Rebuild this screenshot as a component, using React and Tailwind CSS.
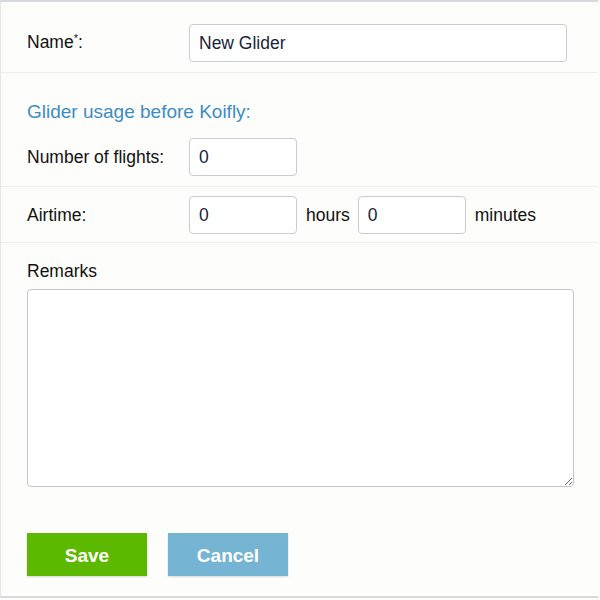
import React, { useState } from 'react';

export default function App() {
  const [name, setName] = useState('New Glider');
  const [flights, setFlights] = useState('0');
  const [hours, setHours] = useState('0');
  const [minutes, setMinutes] = useState('0');
  const [remarks, setRemarks] = useState('');

  const input =
    'h-[38px] rounded-[4px] border border-[#c9cdd1] bg-white px-[9px] text-[17.5px] text-[#1a1f3a] outline-none';

  return (
    <div
      className="w-[600px] h-[600px] bg-[#fdfdfb] text-[#111] overflow-hidden"
      style={{ fontFamily: '"Liberation Sans", Arial, sans-serif' }}
    >
      <div className="w-[598px] h-[598px] border-t-2 border-l border-b-2 border-t-[#d6dadd] border-l-[#e4e7ea] border-b-[#d6dadd]">
        {/* Name */}
        <div className="flex items-center pt-[22px] pb-[10px] border-b border-[#eceff1]">
          <label className="w-[188px] pl-[26px] text-[17.5px] leading-[20px]">
            Name<span className="relative -top-[6px] text-[11px]">*</span>:
          </label>
          <input
            className={`${input} w-[378px]`}
            value={name}
            onChange={(e) => setName(e.target.value)}
          />
        </div>

        {/* Glider usage */}
        <div className="pt-[28px] pb-[10px] border-b border-[#eceff1]">
          <div className="pl-[26px] text-[19px] leading-[22px] text-[#3d8cc5]">
            Glider usage before Koifly:
          </div>
          <div className="flex items-center mt-[15px]">
            <label className="w-[188px] pl-[26px] text-[17.5px] leading-[20px]">
              Number of flights:
            </label>
            <input
              className={`${input} w-[108px]`}
              value={flights}
              onChange={(e) => setFlights(e.target.value)}
            />
          </div>
        </div>

        {/* Airtime */}
        <div className="flex items-center pt-[9px] pb-[8px] border-b border-[#eceff1]">
          <label className="w-[188px] pl-[26px] text-[17.5px] leading-[20px]">
            Airtime:
          </label>
          <input
            className={`${input} w-[108px]`}
            value={hours}
            onChange={(e) => setHours(e.target.value)}
          />
          <span className="ml-[9px] mr-[8px] text-[17.5px]">hours</span>
          <input
            className={`${input} w-[108px]`}
            value={minutes}
            onChange={(e) => setMinutes(e.target.value)}
          />
          <span className="ml-[9px] text-[17.5px]">minutes</span>
        </div>

        {/* Remarks */}
        <div className="pt-[18px] pl-[26px]">
          <div className="text-[17.5px] leading-[20px]">Remarks</div>
          <textarea
            className="mt-[8px] block w-[547px] h-[198px] rounded-[4px] border border-[#c2c6ca] bg-white outline-none resize-y"
            value={remarks}
            onChange={(e) => setRemarks(e.target.value)}
          />
          <div className="flex gap-[21px] mt-[46px]">
            <button className="w-[120px] h-[43px] pt-[3px] bg-[#5db800] text-white font-bold text-[19px] shadow-[0_1px_2px_rgba(0,0,0,0.15)]">
              Save
            </button>
            <button className="w-[120px] h-[43px] pt-[3px] bg-[#76b4d4] text-white font-bold text-[19px] shadow-[0_1px_2px_rgba(0,0,0,0.15)]">
              Cancel
            </button>
          </div>
        </div>
      </div>
    </div>
  );
}
